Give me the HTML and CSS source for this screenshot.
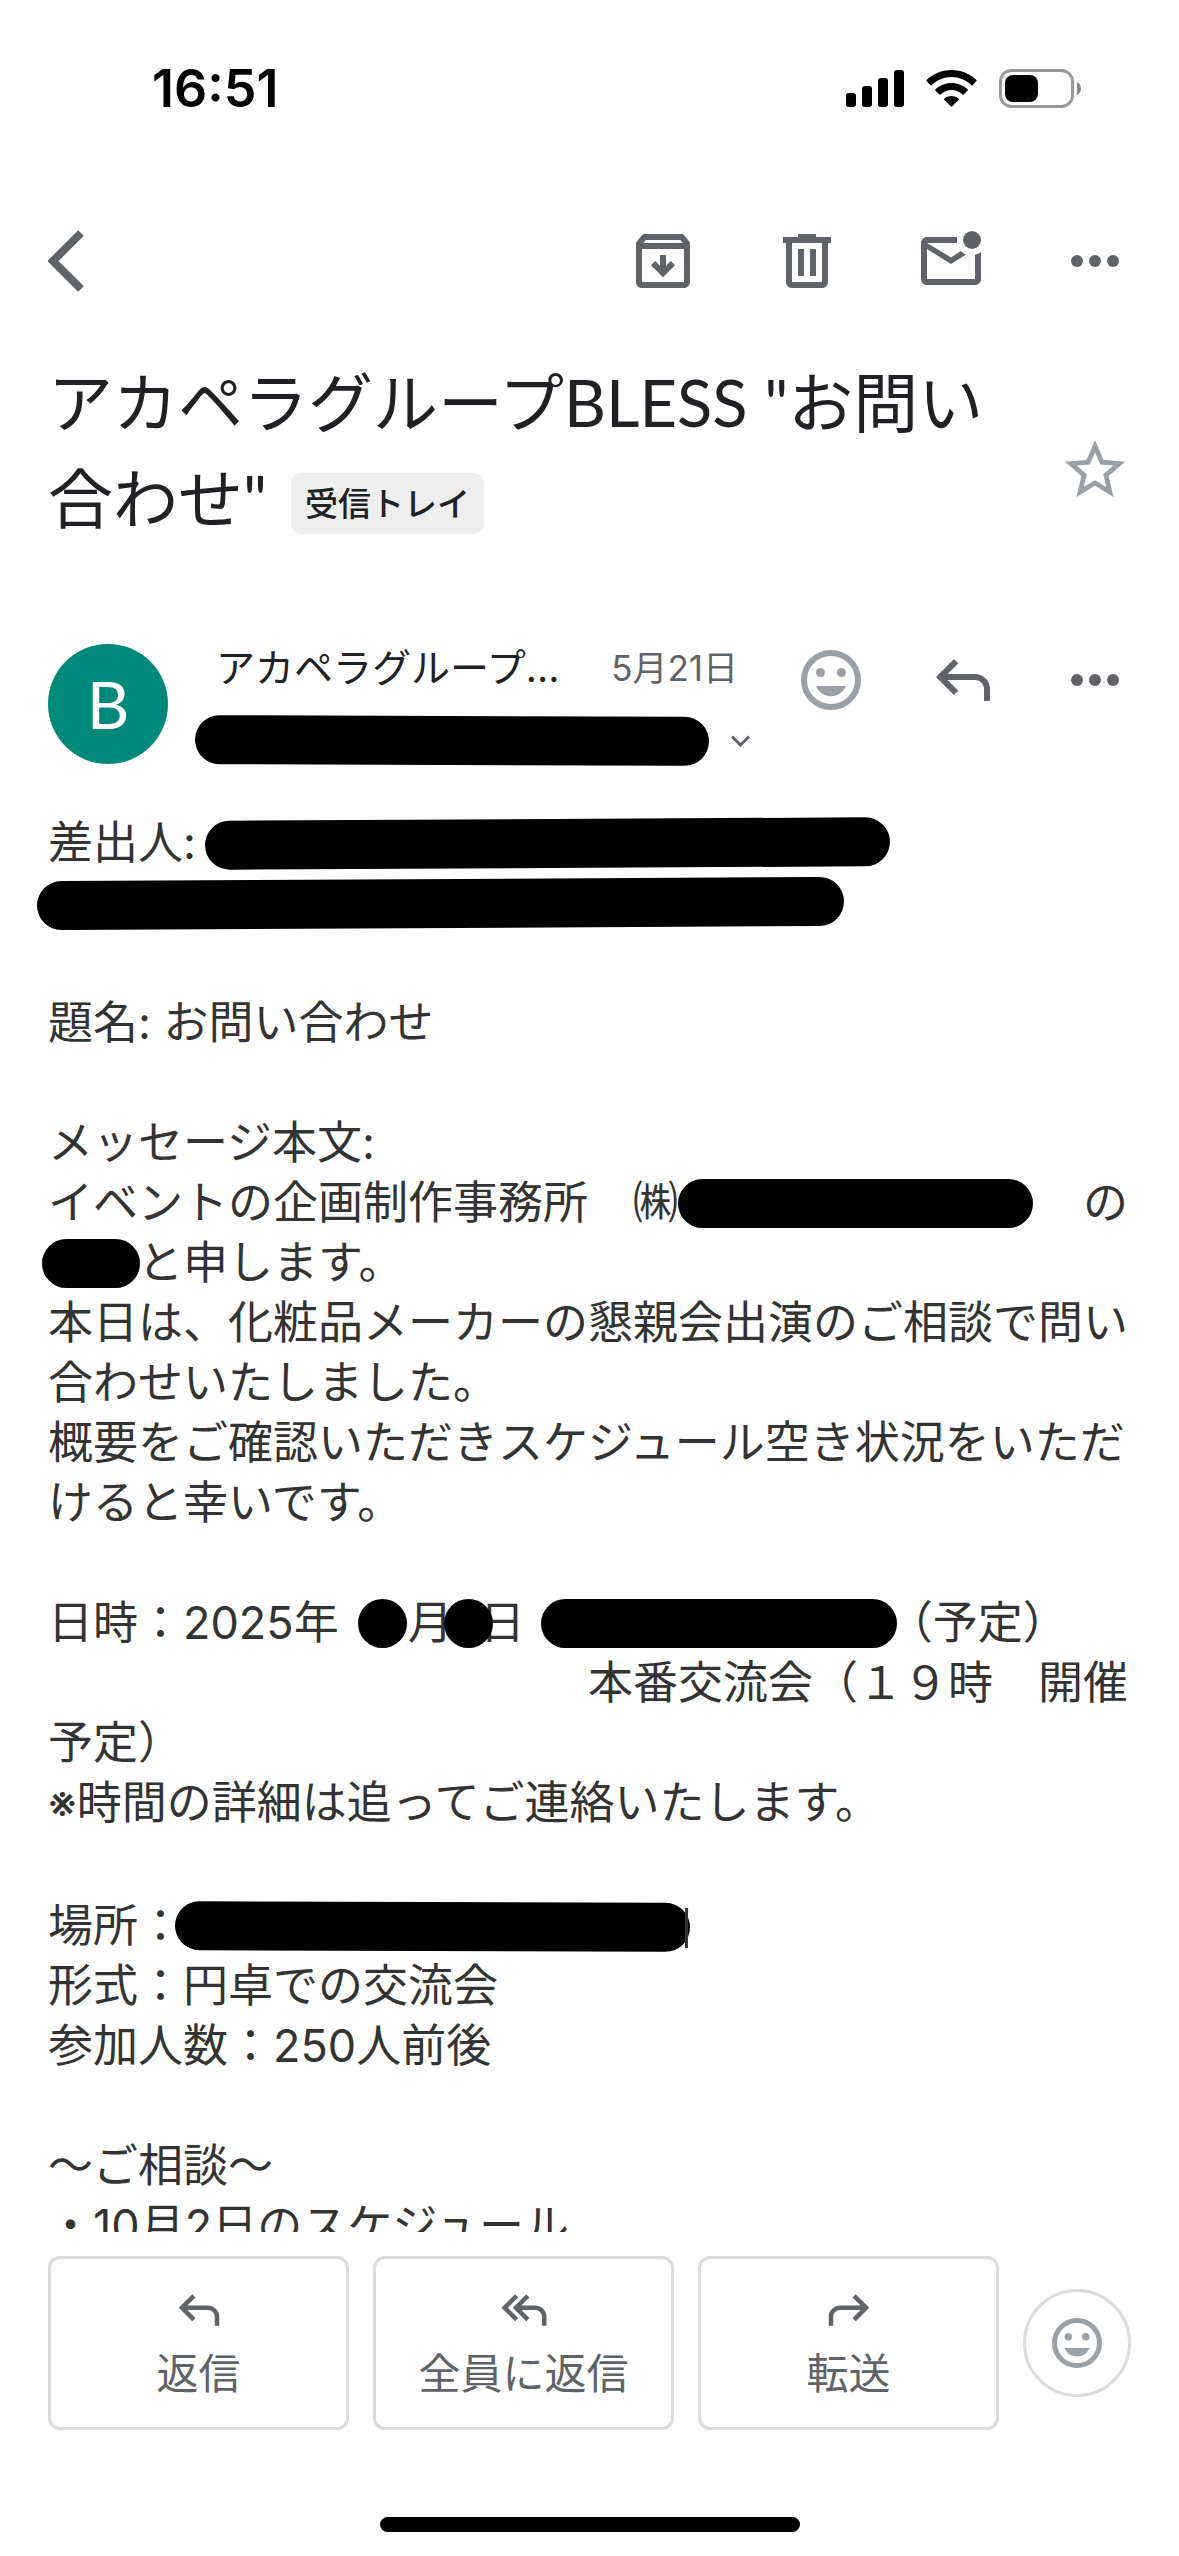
FILE: index.html
```html
<!DOCTYPE html>
<html lang="ja">
<head>
    <meta charset="UTF-8">
    <meta name="viewport" content="width=device-width, initial-scale=1.0">
    <title>お問い合わせ</title>
    <link rel="stylesheet" href="styles.css">
</head>
<body>

    <div class="status-bar">
        <span class="time">16:51</span>
        <div class="status-icons">
            <svg width="58" height="39" viewBox="0 0 58 39">
                <rect x="0" y="24" width="10" height="14" rx="3"/>
                <rect x="16" y="17" width="10" height="21" rx="3"/>
                <rect x="32" y="9" width="10" height="29" rx="3"/>
                <rect x="48" y="1" width="10" height="37" rx="3"/>
            </svg>
            <svg width="51" height="39" viewBox="0 0 51 39">
                <path d="M25.500 1 C35.500 1 44 5 50.500 11 Q51 11.500 50.500 12 L46.500 16.200 Q46 16.600 45.500 16.200 C40 11 33 8 25.500 8 S11 11 5.500 16.200 Q5 16.600 4.500 16.200 L0.500 12 Q0 11.500 0.500 11 C7 5 15.500 1 25.500 1 Z"/>
                <path d="M25.500 14 C31.500 14 37.500 16.500 41.700 20.500 Q42.200 21 41.700 21.500 L37.500 25.500 Q37 26 36.500 25.500 C33.500 22.700 29.700 21 25.500 21 S17.500 22.700 14.500 25.500 Q14 26 13.500 25.500 L9.300 21.500 Q8.800 21 9.300 20.500 C13.500 16.500 19.500 14 25.500 14 Z"/>
                <path d="M25.500 27 C28.300 27 30.800 28 32.800 29.700 Q33.300 30.200 32.800 30.700 L26 37.500 Q25.500 38 25 37.500 L18.200 30.700 Q17.700 30.200 18.200 29.700 C20.200 28 22.700 27 25.500 27 Z"/>
            </svg>
            <svg width="83" height="39" viewBox="0 0 83 39">
                <rect x="1.500" y="1.500" width="72" height="36" rx="11" fill="none" stroke="#999" stroke-width="3"/>
                <rect x="6" y="6" width="33" height="27" rx="8"/>
                <path d="M78 13 Q82 15 82 19.500 Q82 24 78 26 Z" fill="#888"/>
            </svg>
        </div>
    </div>

    <nav class="toolbar">
        <button class="icon-btn back" aria-label="戻る">
            <svg viewBox="0 0 72 72"><path d="M33 8 L5 36 L33 64" fill="none" stroke="currentColor" stroke-width="8"/></svg>
        </button>
        <button class="icon-btn" aria-label="アーカイブ">
            <svg viewBox="0 0 24 24"><path fill-rule="evenodd" d="M20.540 5.230l-1.390-1.680C18.880 3.210 18.470 3 18 3H6c-.470 0-.880.210-1.160.550L3.460 5.230C3.170 5.570 3 6.020 3 6.500V19c0 1.100.900 2 2 2h14c1.100 0 2-.900 2-2V6.500c0-.480-.170-.930-.460-1.270zM6.240 5h11.520l.830 1H5.420l.820-1zM5 19V8h14v11H5zM11 10v3.600l-1.600-1.600L8 13.400l4 4 4-4-1.400-1.400-1.600 1.600V10z"/></svg>
        </button>
        <button class="icon-btn" aria-label="削除">
            <svg viewBox="0 0 24 24"><path fill-rule="evenodd" d="M15 4V3H9v1H4v2h1v13c0 1.100.900 2 2 2h10c1.100 0 2-.900 2-2V6h1V4h-5zm2 15H7V6h10v13zM9 8h2v9H9zM13 8h2v9h-2z"/></svg>
        </button>
        <button class="icon-btn" aria-label="未読にする">
            <svg viewBox="0 0 24 24"><circle cx="19" cy="5" r="3"/><path d="M14 4H4c-1.100 0-2 .900-2 2v12c0 1.100.900 2 2 2h16c1.100 0 2-.900 2-2V9c-.600.450-1.250.760-2 .900V18H4V8l8 5 4.900-3.100c-.600-.300-1.150-.700-1.600-1.200L12 10.800 4 6h10z"/></svg>
        </button>
        <button class="icon-btn" aria-label="その他">
            <svg viewBox="0 0 24 24"><circle cx="6" cy="12" r="2"/><circle cx="12" cy="12" r="2"/><circle cx="18" cy="12" r="2"/></svg>
        </button>
    </nav>

    <header class="subject">
        <h1>アカペラグループBLESS "お問い合わせ"<span class="label">受信トレイ</span></h1>
        <button class="icon-btn star" aria-label="スター">
            <svg viewBox="0 0 24 24"><path d="M22 9.240l-7.190-.620L12 2 9.190 8.630 2 9.240l5.460 4.730L5.820 21 12 17.270 18.180 21l-1.630-7.030L22 9.240zM12 15.400l-3.760 2.270 1-4.280-3.320-2.880 4.380-.380L12 6.100l1.710 4.040 4.380.380-3.320 2.880 1 4.280L12 15.400z"/></svg>
        </button>
    </header>

    <section class="sender">
        <div class="avatar">B</div>
        <div class="sender-info">
            <div class="sender-top">
                <span class="name">アカペラグループ...</span>
                <span class="date">5月21日</span>
            </div>
            <div class="sender-to">
                <span class="redacted r-to tilt-down"></span>
                <svg width="19" height="12" viewBox="0 0 19 12"><path d="M1 1.500 L9.500 10 L18 1.500" fill="none" stroke="#5f6368" stroke-width="3"/></svg>
            </div>
        </div>
        <div class="sender-actions">
            <button class="icon-btn light" aria-label="リアクション">
                <svg viewBox="0 0 24 24"><circle cx="12" cy="12" r="9" fill="none" stroke="currentColor" stroke-width="2"/><circle cx="8.500" cy="9.500" r="1.500"/><circle cx="15.500" cy="9.500" r="1.500"/><path d="M7 14h10c-.800 2-2.700 3.400-5 3.400S7.800 16 7 14z"/></svg>
            </button>
            <button class="icon-btn" aria-label="返信する">
                <svg viewBox="0 0 24 24"><path d="M3 11l6-6 1.410 1.410L6.830 10H16c2.760 0 5 2.240 5 5v4h-2v-4c0-1.660-1.340-3-3-3H6.830l3.590 3.590L9 17z"/></svg>
            </button>
            <button class="icon-btn" aria-label="メニュー">
                <svg viewBox="0 0 24 24"><circle cx="6" cy="12" r="2"/><circle cx="12" cy="12" r="2"/><circle cx="18" cy="12" r="2"/></svg>
            </button>
        </div>
    </section>

    <main class="message">
        <p>差出人:<span class="redacted r-from tilt-up"></span><br><span class="redacted r-address tilt-up"></span></p>
        <p>題名: お問い合わせ</p>
        <p>メッセージ本文:<br>イベントの企画制作事務所　㈱<span class="redacted r-company"></span>　の<br><span class="redacted r-name"></span>と申します。<br>本日は、化粧品メーカーの懇親会出演のご相談で問い合わせいたしました。<br>概要をご確認いただきスケジュール空き状況をいただけると幸いです。</p>
        <p>日時：2025年<span class="redacted r-month"></span>月<span class="redacted r-day"></span>日<span class="redacted r-time"></span>（予定）<br>　　　　　　　　　　　　本番交流会（１９時　開催予定）<br>※時間の詳細は追ってご連絡いたします。</p>
        <p class="venue">場所：<span class="redacted r-place tilt-down"></span><br>形式：円卓での交流会<br>参加人数：250人前後</p>
        <p>〜ご相談〜<br>・10月2日のスケジュール</p>
    </main>

    <footer class="actions">
        <button class="action">
            <svg viewBox="0 0 24 24"><path d="M3 11l6-6 1.410 1.410L6.830 10H16c2.760 0 5 2.240 5 5v4h-2v-4c0-1.660-1.340-3-3-3H6.830l3.590 3.590L9 17z"/></svg>
            返信
        </button>
        <button class="action">
            <svg viewBox="0 0 24 24"><path d="M8 5l1.410 1.410L4.830 11l4.590 4.590L8 17l-6-6zM7 11l6-6 1.410 1.410L10.830 10H17c2.760 0 5 2.240 5 5v4h-2v-4c0-1.660-1.340-3-3-3H10.830l3.590 3.590L13 17z"/></svg>
            全員に返信
        </button>
        <button class="action">
            <svg viewBox="0 0 24 24"><path d="M21 11l-6-6-1.410 1.410L17.170 10H8c-2.760 0-5 2.240-5 5v4h2v-4c0-1.660 1.340-3 3-3h9.170l-3.590 3.590L15 17z"/></svg>
            転送
        </button>
        <button class="emoji-btn" aria-label="絵文字">
            <svg viewBox="0 0 24 24"><circle cx="12" cy="12" r="9" fill="none" stroke="currentColor" stroke-width="2"/><circle cx="8.500" cy="9.500" r="1.500"/><circle cx="15.500" cy="9.500" r="1.500"/><path d="M7 14h10c-.800 2-2.700 3.400-5 3.400S7.800 16 7 14z"/></svg>
        </button>
    </footer>

    <div class="home-indicator"></div>

</body>
</html>
```
FILE: styles.css
```css
* {
    margin: 0;
    padding: 0;
    box-sizing: border-box;
}

body {
    height: 100vh;
    display: flex;
    flex-direction: column;
    overflow: hidden;
    background-color: #fff;
    color: #202124;
    font-family: Lato, "Noto Sans CJK JP", sans-serif;
}

button {
    background: none;
    border: none;
    color: #5f6368;
    font-family: inherit;
    cursor: pointer;
}

svg {
    display: block;
    flex-shrink: 0;
}

/* Status bar */
.status-bar {
    display: flex;
    justify-content: space-between;
    align-items: center;
    height: 177px;
    padding: 0 97px 0 152px;
}

.time {
    font-family: Inter, sans-serif;
    font-size: 52px;
    font-weight: 600;
    color: #000;
}

.status-icons {
    display: flex;
    gap: 22px;
}

/* Toolbar */
.toolbar {
    display: flex;
    gap: 72px;
    padding: 48px 48px 0;
}

.icon-btn {
    width: 72px;
    height: 72px;
    flex-shrink: 0;
}

.icon-btn svg {
    width: 72px;
    height: 72px;
    fill: currentColor;
}

.back {
    margin-right: auto;
}

.light, .star {
    color: #9aa0a6;
}

/* Subject */
.subject {
    display: flex;
    justify-content: space-between;
    padding: 57px 48px 0;
}

.subject h1 {
    max-width: 960px;
    font-size: 65px;
    font-weight: 400;
    line-height: 96px;
}

.label {
    display: inline-block;
    margin-left: 24px;
    padding: 0 14px;
    border-radius: 10px;
    background-color: #eee;
    font-size: 33px;
    font-weight: 500;
    line-height: 61px;
    vertical-align: 7px;
}

.star {
    margin-top: 80px;
}

/* Sender */
.sender {
    display: flex;
    align-items: flex-start;
    padding: 0 48px;
    margin-top: 98px;
}

.avatar {
    width: 120px;
    height: 120px;
    border-radius: 50%;
    background-color: #00897b;
    color: #fff;
    font-size: 66px;
    line-height: 120px;
    text-align: center;
}

.sender-info {
    flex: 1;
    padding-left: 27px;
    font-family: Inter, "Noto Sans CJK JP", sans-serif;
}

.sender-top {
    display: flex;
    justify-content: space-between;
    align-items: center;
    padding: 0 57px 0 21px;
    line-height: 48px;
}

.name {
    font-size: 39px;
}

.date {
    font-size: 35px;
    color: #5f6368;
}

.sender-to {
    display: flex;
    align-items: center;
    gap: 22px;
    margin-top: 24px;
}

.sender-actions {
    display: flex;
    gap: 60px;
}

/* Message */
.message {
    flex: 1;
    min-height: 0;
    overflow: hidden;
    padding: 48px 48px 0;
    color: #333;
    font-family: Inter, "Noto Sans CJK JP", sans-serif;
    font-size: 45px;
    line-height: 60px;
}

.message p {
    margin-bottom: 60px;
    white-space: pre-wrap;
}

.message .venue {
    padding-top: 3px;
}

.redacted {
    display: inline-block;
    position: relative;
    height: 49px;
    border-radius: 25px;
    background-color: #000;
    vertical-align: -9px;
}

.tilt-up { transform: rotate(-0.3deg); }
.tilt-down { transform: rotate(0.2deg); }

.r-to { width: 514px; }
.r-from { width: 685px; margin-left: 9px; }
.r-address { width: 807px; margin-left: -11px; }
.r-company { width: 355px; margin-right: 5px; }
.r-name { width: 98px; margin: 0 -2px 0 -6px; }
.r-month { width: 49px; margin: 0 1px 0 19px; }
.r-day { width: 49px; margin: 0 -13px 0 -9px; }
.r-time { width: 356px; margin: 0 -9px 0 16px; }
.r-place { width: 515px; margin-left: -8px; }

/* edge of the last character behind the bar */
.r-place::after {
    content: "";
    position: absolute;
    top: 5px;
    right: 2px;
    width: 3px;
    height: 40px;
    background-color: #333;
}

/* Bottom actions */
.actions {
    display: flex;
    align-items: center;
    gap: 24px;
    padding: 24px 48px 0;
}

.action {
    flex: 1;
    display: flex;
    flex-direction: column;
    align-items: center;
    height: 174px;
    padding-top: 24px;
    border: 3px solid #dadce0;
    border-radius: 12px;
    font-size: 42px;
    line-height: 72px;
}

.action svg {
    width: 54px;
    height: 54px;
    fill: currentColor;
}

.emoji-btn {
    display: flex;
    align-items: center;
    justify-content: center;
    width: 108px;
    height: 108px;
    border: 3px solid #dadce0;
    border-radius: 50%;
    color: #9aa0a6;
}

.emoji-btn svg {
    width: 60px;
    height: 60px;
    fill: currentColor;
}

.home-indicator {
    flex-shrink: 0;
    width: 420px;
    height: 15px;
    margin: 87px auto 24px;
    border-radius: 8px;
    background-color: #000;
}
```
